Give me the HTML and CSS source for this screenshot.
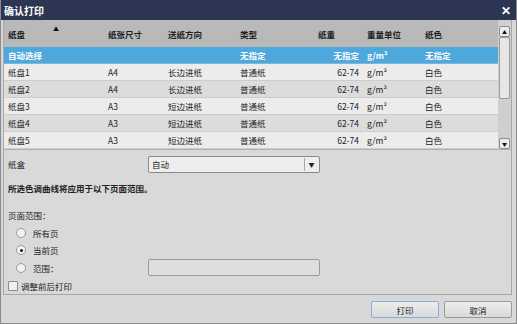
FILE: index.html
```html
<!DOCTYPE html>
<html lang="zh-CN">
<head>
    <meta charset="UTF-8">
    <title>确认打印</title>
    <link rel="stylesheet" href="styles.css">
</head>
<body>
    <div class="dialog">
        <div class="title-bar">
            <span class="title">确认打印</span>
            <span class="close">✕</span>
        </div>

        <div class="panel">
            <!-- tray table -->
            <div class="table-wrap">
                <div class="table">
                    <div class="row head">
                        <div class="cell">纸盘<span class="sort">▲</span></div>
                        <div class="cell">纸张尺寸</div>
                        <div class="cell">送纸方向</div>
                        <div class="cell">类型</div>
                        <div class="cell">纸重</div>
                        <div class="cell">重量单位</div>
                        <div class="cell">纸色</div>
                    </div>
                    <div class="row selected">
                        <div class="cell">自动选择</div>
                        <div class="cell"></div>
                        <div class="cell"></div>
                        <div class="cell">无指定</div>
                        <div class="cell num">无指定</div>
                        <div class="cell">g/m²</div>
                        <div class="cell">无指定</div>
                    </div>
                    <div class="row">
                        <div class="cell">纸盘1</div>
                        <div class="cell">A4</div>
                        <div class="cell">长边进纸</div>
                        <div class="cell">普通纸</div>
                        <div class="cell num">62-74</div>
                        <div class="cell">g/m²</div>
                        <div class="cell">白色</div>
                    </div>
                    <div class="row alt">
                        <div class="cell">纸盘2</div>
                        <div class="cell">A4</div>
                        <div class="cell">长边进纸</div>
                        <div class="cell">普通纸</div>
                        <div class="cell num">62-74</div>
                        <div class="cell">g/m²</div>
                        <div class="cell">白色</div>
                    </div>
                    <div class="row">
                        <div class="cell">纸盘3</div>
                        <div class="cell">A3</div>
                        <div class="cell">短边进纸</div>
                        <div class="cell">普通纸</div>
                        <div class="cell num">62-74</div>
                        <div class="cell">g/m²</div>
                        <div class="cell">白色</div>
                    </div>
                    <div class="row alt">
                        <div class="cell">纸盘4</div>
                        <div class="cell">A3</div>
                        <div class="cell">短边进纸</div>
                        <div class="cell">普通纸</div>
                        <div class="cell num">62-74</div>
                        <div class="cell">g/m²</div>
                        <div class="cell">白色</div>
                    </div>
                    <div class="row">
                        <div class="cell">纸盘5</div>
                        <div class="cell">A3</div>
                        <div class="cell">短边进纸</div>
                        <div class="cell">普通纸</div>
                        <div class="cell num">62-74</div>
                        <div class="cell">g/m²</div>
                        <div class="cell">白色</div>
                    </div>
                </div>
                <div class="scrollbar">
                    <div class="sb-btn">▲</div>
                    <div class="sb-track">
                        <div class="sb-thumb"></div>
                    </div>
                    <div class="sb-btn">▼</div>
                </div>
            </div>

            <div class="options">
                <div class="field">
                    <span class="field-label">纸盒</span>
                    <div class="select">
                        <span>自动</span>
                        <span class="select-btn">▼</span>
                    </div>
                </div>

                <p class="note">所选色调曲线将应用于以下页面范围。</p>

                <p class="group-label">页面范围：</p>
                <div class="radio-row">
                    <span class="radio"></span>所有页
                </div>
                <div class="radio-row">
                    <span class="radio checked"></span>当前页
                </div>
                <div class="radio-row range">
                    <span class="radio"></span><span class="range-label">范围：</span>
                    <div class="text-input"></div>
                </div>
                <div class="check-row">
                    <span class="checkbox"></span>调整前后打印
                </div>
            </div>
        </div>

        <div class="footer">
            <button class="btn primary">打印</button>
            <button class="btn">取消</button>
        </div>
    </div>
</body>
</html>
```

FILE: styles.css
```css
body {
    margin: 0;
    font-family: "Noto Sans CJK SC", "Noto Sans", sans-serif;
    font-size: 8.5px;
    color: #222;
    background: #d8d8d8;
}

.dialog {
    width: 517px;
    height: 324px;
    box-sizing: border-box;
    border: 1px solid #8a8a8a;
    border-top: none;
    background: #d8d8d8;
    display: flex;
    flex-direction: column;
}

/* title bar */
.title-bar {
    height: 20px;
    flex-shrink: 0;
    background: #2c3552;
    display: flex;
    align-items: center;
    justify-content: space-between;
    padding: 0 5px 0 3px;
}
.title {
    color: #fff;
    font-size: 10px;
    font-weight: bold;
}
.close {
    color: #fff;
    font-size: 12px;
    font-weight: bold;
    line-height: 1;
}

/* main panel */
.panel {
    height: 275px;
    margin: 0 4px 0 2px;
    border: 1px solid #a8a8a8;
    border-top: none;
    background: #d9d9d9;
    box-sizing: border-box;
}

.table-wrap {
    display: flex;
    height: 129px;
    border-bottom: 1px solid #b0b0b0;
}
.table {
    width: 494px;
}
.row {
    display: grid;
    grid-template-columns: 100px 60px 72px 78px 49px 58px 1fr;
    height: 17px;
    line-height: 16px;
    background: #ececec;
    border-bottom: 1px solid #cdcdcd;
    box-sizing: border-box;
}
.row.alt {
    background: #dcdcdc;
}
.row.head {
    height: 27px;
    line-height: 29px;
    background: #b9b9b9;
    font-weight: bold;
    border-bottom: none;
}
.row.selected {
    background: #4ea8dc;
    color: #fff;
    font-weight: bold;
    border-bottom: 1px solid #7ab8dc;
}
.cell {
    padding: 0 4px;
    white-space: nowrap;
    position: relative;
}
.cell.num {
    text-align: right;
}
.row.head .cell.num {
    text-align: left;
}
.sort {
    position: absolute;
    left: 49px;
    top: -6px;
    font-size: 6px;
    color: #111;
}

/* scrollbar */
.scrollbar {
    width: 13px;
    padding-top: 6px;
    background: #cfcfcf;
    display: flex;
    flex-direction: column;
    box-sizing: border-box;
}
.sb-btn {
    height: 9px;
    margin: 0 1px;
    border: 1px solid #8c8c8c;
    border-radius: 2px;
    background: #ececec;
    font-size: 5px;
    line-height: 9px;
    text-align: center;
    color: #111;
}
.sb-track {
    flex: 1;
}
.sb-thumb {
    height: 62px;
    margin: 0 1px;
    border: 1px solid #9a9a9a;
    border-radius: 2px;
    background: #e6e6e6;
    box-sizing: border-box;
}

/* options */
.options {
    padding: 5px 4px 0 4px;
}
.field {
    display: flex;
    align-items: center;
    height: 18px;
}
.field-label {
    width: 140px;
}
.select {
    width: 172px;
    height: 17px;
    box-sizing: border-box;
    border: 1px solid #8a8a8a;
    border-radius: 2px;
    background: #eeeeee;
    display: flex;
    align-items: center;
    justify-content: space-between;
    padding-left: 3px;
}
.select-btn {
    width: 13px;
    height: 13px;
    margin-right: 1px;
    border-left: 1px solid #aaa;
    font-size: 6px;
    line-height: 13px;
    text-align: center;
    color: #222;
}
.note {
    margin: 8px 0 0;
    font-weight: bold;
    line-height: 15px;
}
.group-label {
    margin: 12px 0 2px;
    line-height: 14px;
}
.radio-row, .check-row {
    display: flex;
    align-items: center;
    height: 17.5px;
}
.radio-row {
    padding-left: 8px;
}
.radio {
    width: 10px;
    height: 10px;
    box-sizing: border-box;
    border: 1px solid #9a9a9a;
    border-radius: 50%;
    background: #f2f2f2;
    margin-right: 7px;
    position: relative;
}
.radio.checked::after {
    content: "";
    position: absolute;
    left: 2.5px;
    top: 2.5px;
    width: 3px;
    height: 3px;
    border-radius: 50%;
    background: #111;
}
.range-label {
    width: 115px;
}
.text-input {
    width: 172px;
    height: 17px;
    box-sizing: border-box;
    border: 1px solid #9a9a9a;
    border-radius: 2px;
    background: #dedede;
}
.check-row {
    margin-top: 1px;
}
.checkbox {
    width: 10px;
    height: 10px;
    box-sizing: border-box;
    border: 1px solid #8a8a8a;
    border-radius: 1px;
    background: #f0f0f0;
    margin-right: 3px;
}

/* footer */
.footer {
    flex: 1;
    display: flex;
    justify-content: flex-end;
    align-items: flex-start;
    gap: 5px;
    padding: 6px 4px 0 0;
}
.btn {
    width: 68px;
    height: 17px;
    font-family: inherit;
    font-size: 8.5px;
    color: #222;
    border: 1px solid #9a9a9a;
    border-radius: 2px;
    background: linear-gradient(#ededed, #d9d9d9);
    padding: 0;
}
.btn.primary {
    border-color: #86aee0;
}
```
